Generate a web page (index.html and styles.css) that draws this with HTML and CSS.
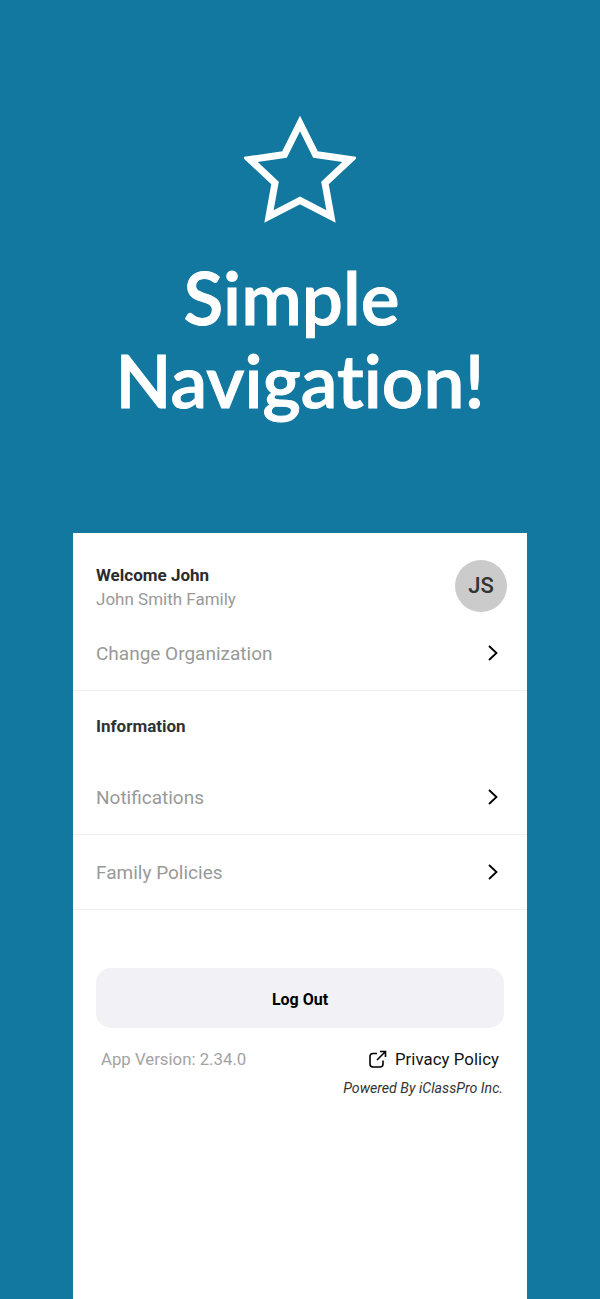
FILE: index.html
```html
<!doctype html>
<html lang="en">
<head>
  <meta charset="utf-8">
  <title>Simple Navigation</title>
  <link rel="stylesheet" href="styles.css">
</head>
<body>
  <header class="hero">
    <svg class="star" width="112" height="108" viewBox="244 116 112 108">
      <polygon points="300,123.500 315.500,154.500 350,159.500 325,183 331,216.500 300,200.500 269,216.500 275,183 250,159.500 284.500,154.500" fill="none" stroke="#fff" stroke-width="7" stroke-miterlimit="10"/>
    </svg>
    <h1><span class="hero-first">Simple</span><br>Navigation!</h1>
  </header>

  <main class="card">
    <section class="welcome">
      <div>
        <div class="welcome-name">Welcome John</div>
        <div class="welcome-family">John Smith Family</div>
      </div>
      <div class="avatar">JS</div>
    </section>

    <a class="row row-org">
      <span>Change Organization</span>
      <svg class="chevron" width="12" height="18" viewBox="0 0 12 18"><path d="M2 2l7.500 7L2 16" fill="none" stroke="#000" stroke-width="1.800"/></svg>
    </a>

    <h2 class="section-title">Information</h2>

    <a class="row">
      <span>Notifications</span>
      <svg class="chevron" width="12" height="18" viewBox="0 0 12 18"><path d="M2 2l7.500 7L2 16" fill="none" stroke="#000" stroke-width="1.800"/></svg>
    </a>
    <a class="row">
      <span>Family Policies</span>
      <svg class="chevron" width="12" height="18" viewBox="0 0 12 18"><path d="M2 2l7.500 7L2 16" fill="none" stroke="#000" stroke-width="1.800"/></svg>
    </a>

    <button class="logout">Log Out</button>

    <div class="meta">
      <span class="version">App Version: 2.34.0</span>
      <a class="privacy">
        <svg width="18" height="18" viewBox="0 0 18 18" fill="none" stroke="#000" stroke-width="1.600">
          <path d="M8 3.500H4a3 3 0 0 0-3 3v7.500a3 3 0 0 0 3 3h7a3 3 0 0 0 3-3V10.500"/>
          <path d="M8 10L16 2M11 1.500h5.500v5.500"/>
        </svg>
        <span>Privacy Policy</span>
      </a>
    </div>
    <div class="powered">Powered By iClassPro Inc.</div>
  </main>
</body>
</html>
```

FILE: styles.css
```css
html, body {
  margin: 0;
  height: 1299px;
  overflow: hidden;
}
body {
  font-family: Roboto, "Liberation Sans", sans-serif;
  background-color: #12789f;
}
.hero {
  height: 533px;
  padding-top: 116px;
  box-sizing: border-box;
  text-align: center;
}
.star {
  display: block;
  margin: 0 auto;
}
h1 {
  margin: 32px 0 0;
  font-family: Lato, sans-serif;
  font-size: 73px;
  font-weight: 600;
  font-variant-ligatures: none;
  -webkit-text-stroke: 1px #fff;
  line-height: 83px;
  color: #fff;
}
.hero-first {
  margin-right: 17px;
}
.card {
  width: 454px;
  height: 766px;
  margin: 0 auto;
  background-color: #fff;
}
.welcome {
  display: flex;
  justify-content: space-between;
  padding: 27px 20px 0 23px;
  height: 65px;
}
.welcome-name {
  margin-top: 6px;
  font-size: 17px;
  font-weight: 700;
  line-height: 19px;
  color: #2b2b2b;
}
.welcome-family {
  margin-top: 3px;
  font-size: 17px;
  line-height: 22px;
  color: #999;
}
.avatar {
  width: 52px;
  height: 52px;
  border-radius: 50%;
  background-color: #cbcbcb;
  color: #333;
  font-size: 22px;
  font-weight: 500;
  line-height: 52px;
  text-align: center;
}
.row {
  display: flex;
  justify-content: space-between;
  align-items: center;
  height: 74px;
  padding: 0 28px 0 23px;
  border-bottom: 1px solid #eff0f1;
  font-size: 19px;
  color: #999;
}
.row-org {
  height: 56px;
  padding-bottom: 9px;
}
.section-title {
  margin: 0;
  height: 69px;
  padding: 26px 23px 0;
  box-sizing: border-box;
  font-size: 17px;
  font-weight: 700;
  line-height: 19px;
  color: #2f3336;
}
.logout {
  display: block;
  width: 408px;
  height: 60px;
  margin: 58px 0 0 23px;
  padding: 2px 0 0;
  border: 0;
  border-radius: 15px;
  background-color: #f2f2f6;
  font-family: inherit;
  font-size: 16px;
  font-weight: 700;
  color: #000;
}
.meta {
  display: flex;
  justify-content: space-between;
  align-items: center;
  margin-top: 20px;
  padding: 0 28px;
  font-size: 16.800px;
  line-height: 22px;
}
.version {
  color: #a3a3a3;
}
.privacy {
  display: flex;
  align-items: center;
  gap: 8px;
  color: #111;
}
.privacy span {
  letter-spacing: 0.050px;
}
.powered {
  margin-top: 8px;
  padding-right: 24px;
  font-size: 14.200px;
  font-style: italic;
  line-height: 20px;
  text-align: right;
  color: #333;
}
```
